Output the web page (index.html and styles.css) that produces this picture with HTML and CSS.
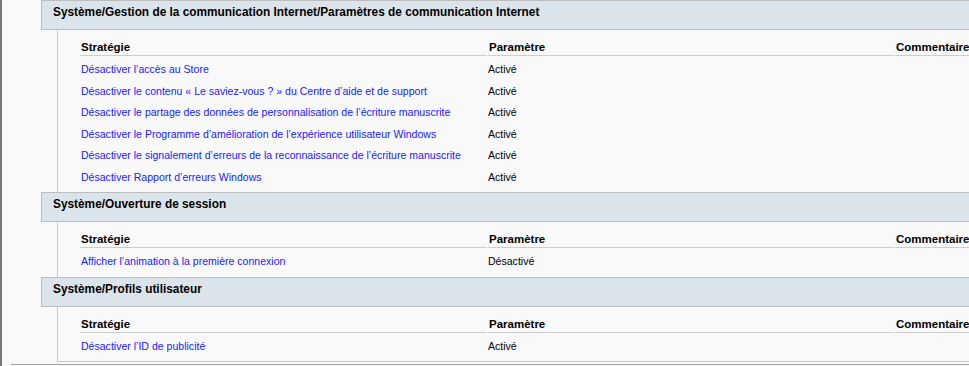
FILE: index.html
```html
<!DOCTYPE html>
<html lang="fr">
<head>
<meta charset="utf-8">
<title>Résultats de stratégie</title>
<link rel="stylesheet" href="styles.css">
</head>
<body>
<div class="frame">
  <div class="report">
    <section class="group">
      <h2 class="group-title">Système/Gestion de la communication Internet/Paramètres de communication Internet</h2>
      <div class="group-body">
        <div class="grid-row head">
          <span class="cell c1">Stratégie</span>
          <span class="cell c2">Paramètre</span>
          <span class="cell c3">Commentaire</span>
        </div>
        <div class="rows">
          <div class="grid-row"><a class="cell c1 link">Désactiver l’accès au Store</a><span class="cell c2">Activé</span><span class="cell c3"></span></div>
          <div class="grid-row"><a class="cell c1 link">Désactiver le contenu « Le saviez-vous ? » du Centre d’aide et de support</a><span class="cell c2">Activé</span><span class="cell c3"></span></div>
          <div class="grid-row"><a class="cell c1 link">Désactiver le partage des données de personnalisation de l’écriture manuscrite</a><span class="cell c2">Activé</span><span class="cell c3"></span></div>
          <div class="grid-row"><a class="cell c1 link">Désactiver le Programme d’amélioration de l’expérience utilisateur Windows</a><span class="cell c2">Activé</span><span class="cell c3"></span></div>
          <div class="grid-row"><a class="cell c1 link">Désactiver le signalement d’erreurs de la reconnaissance de l’écriture manuscrite</a><span class="cell c2">Activé</span><span class="cell c3"></span></div>
          <div class="grid-row"><a class="cell c1 link">Désactiver Rapport d’erreurs Windows</a><span class="cell c2">Activé</span><span class="cell c3"></span></div>
        </div>
      </div>
    </section>
    <section class="group">
      <h2 class="group-title">Système/Ouverture de session</h2>
      <div class="group-body">
        <div class="grid-row head">
          <span class="cell c1">Stratégie</span>
          <span class="cell c2">Paramètre</span>
          <span class="cell c3">Commentaire</span>
        </div>
        <div class="rows">
          <div class="grid-row"><a class="cell c1 link">Afficher l’animation à la première connexion</a><span class="cell c2">Désactivé</span><span class="cell c3"></span></div>
        </div>
      </div>
    </section>
    <section class="group last">
      <h2 class="group-title">Système/Profils utilisateur</h2>
      <div class="group-body">
        <div class="grid-row head">
          <span class="cell c1">Stratégie</span>
          <span class="cell c2">Paramètre</span>
          <span class="cell c3">Commentaire</span>
        </div>
        <div class="rows">
          <div class="grid-row"><a class="cell c1 link">Désactiver l’ID de publicité</a><span class="cell c2">Activé</span><span class="cell c3"></span></div>
        </div>
      </div>
    </section>
  </div>
  <div class="footer-rule"></div>
</div>
</body>
</html>
```
FILE: styles.css
```css
html, body {
  margin: 0;
  padding: 0;
  background: #f9f9f9;
  overflow: hidden;
}

body {
  font-family: "Liberation Sans", Arial, sans-serif;
  color: #000;
}

/* outer pane with its dark left edge */
.frame {
  height: 366px;
  border-left: 2px solid #767676;
  box-sizing: border-box;
  overflow: hidden;
}

.report {
  margin-left: 39px;
}

/* shaded band naming each policy path */
.group-title {
  margin: 0;
  box-sizing: border-box;
  height: 30px;
  padding: 4px 0 0 11px;
  border: 1px solid #bdbdbd;
  border-right: 0;
  background: #dbe4eb;
  font-size: 11.85px;
  font-weight: bold;
  line-height: 15px;
  white-space: nowrap;
}

.group-body {
  margin-left: 16px;
  border-left: 1px solid #cbcbcb;
  padding-left: 22px;
  padding-bottom: 4px;
}

.group.last .group-body {
  border-bottom: 1px solid #c8c8c8;
}

.grid-row {
  display: flex;
  gap: 1px;
  white-space: nowrap;
}

.cell {
  padding-left: 1px;
  overflow: hidden;
  box-sizing: border-box;
}

.c1 { flex: 0 0 406px; }
.c2 { flex: 0 0 405px; }
.c3 { flex: 0 0 120px; }

/* column captions with their underline */
.head .cell {
  box-sizing: content-box;
  height: 14px;
  padding-top: 10px;
  padding-bottom: 1px;
  line-height: 14px;
  font-size: 11.5px;
  font-weight: bold;
  border-bottom: 1px solid #cdcdcd;
}

.rows {
  padding-top: 3px;
}

.rows .cell {
  height: 21.5px;
  line-height: 21.5px;
  font-size: 10.55px;
}

.link {
  color: #1a1aff;
  text-decoration: none;
}

.footer-rule {
  margin-left: 9px;
  margin-top: 2px;
  border-top: 1px solid #a3a3a3;
}
```
